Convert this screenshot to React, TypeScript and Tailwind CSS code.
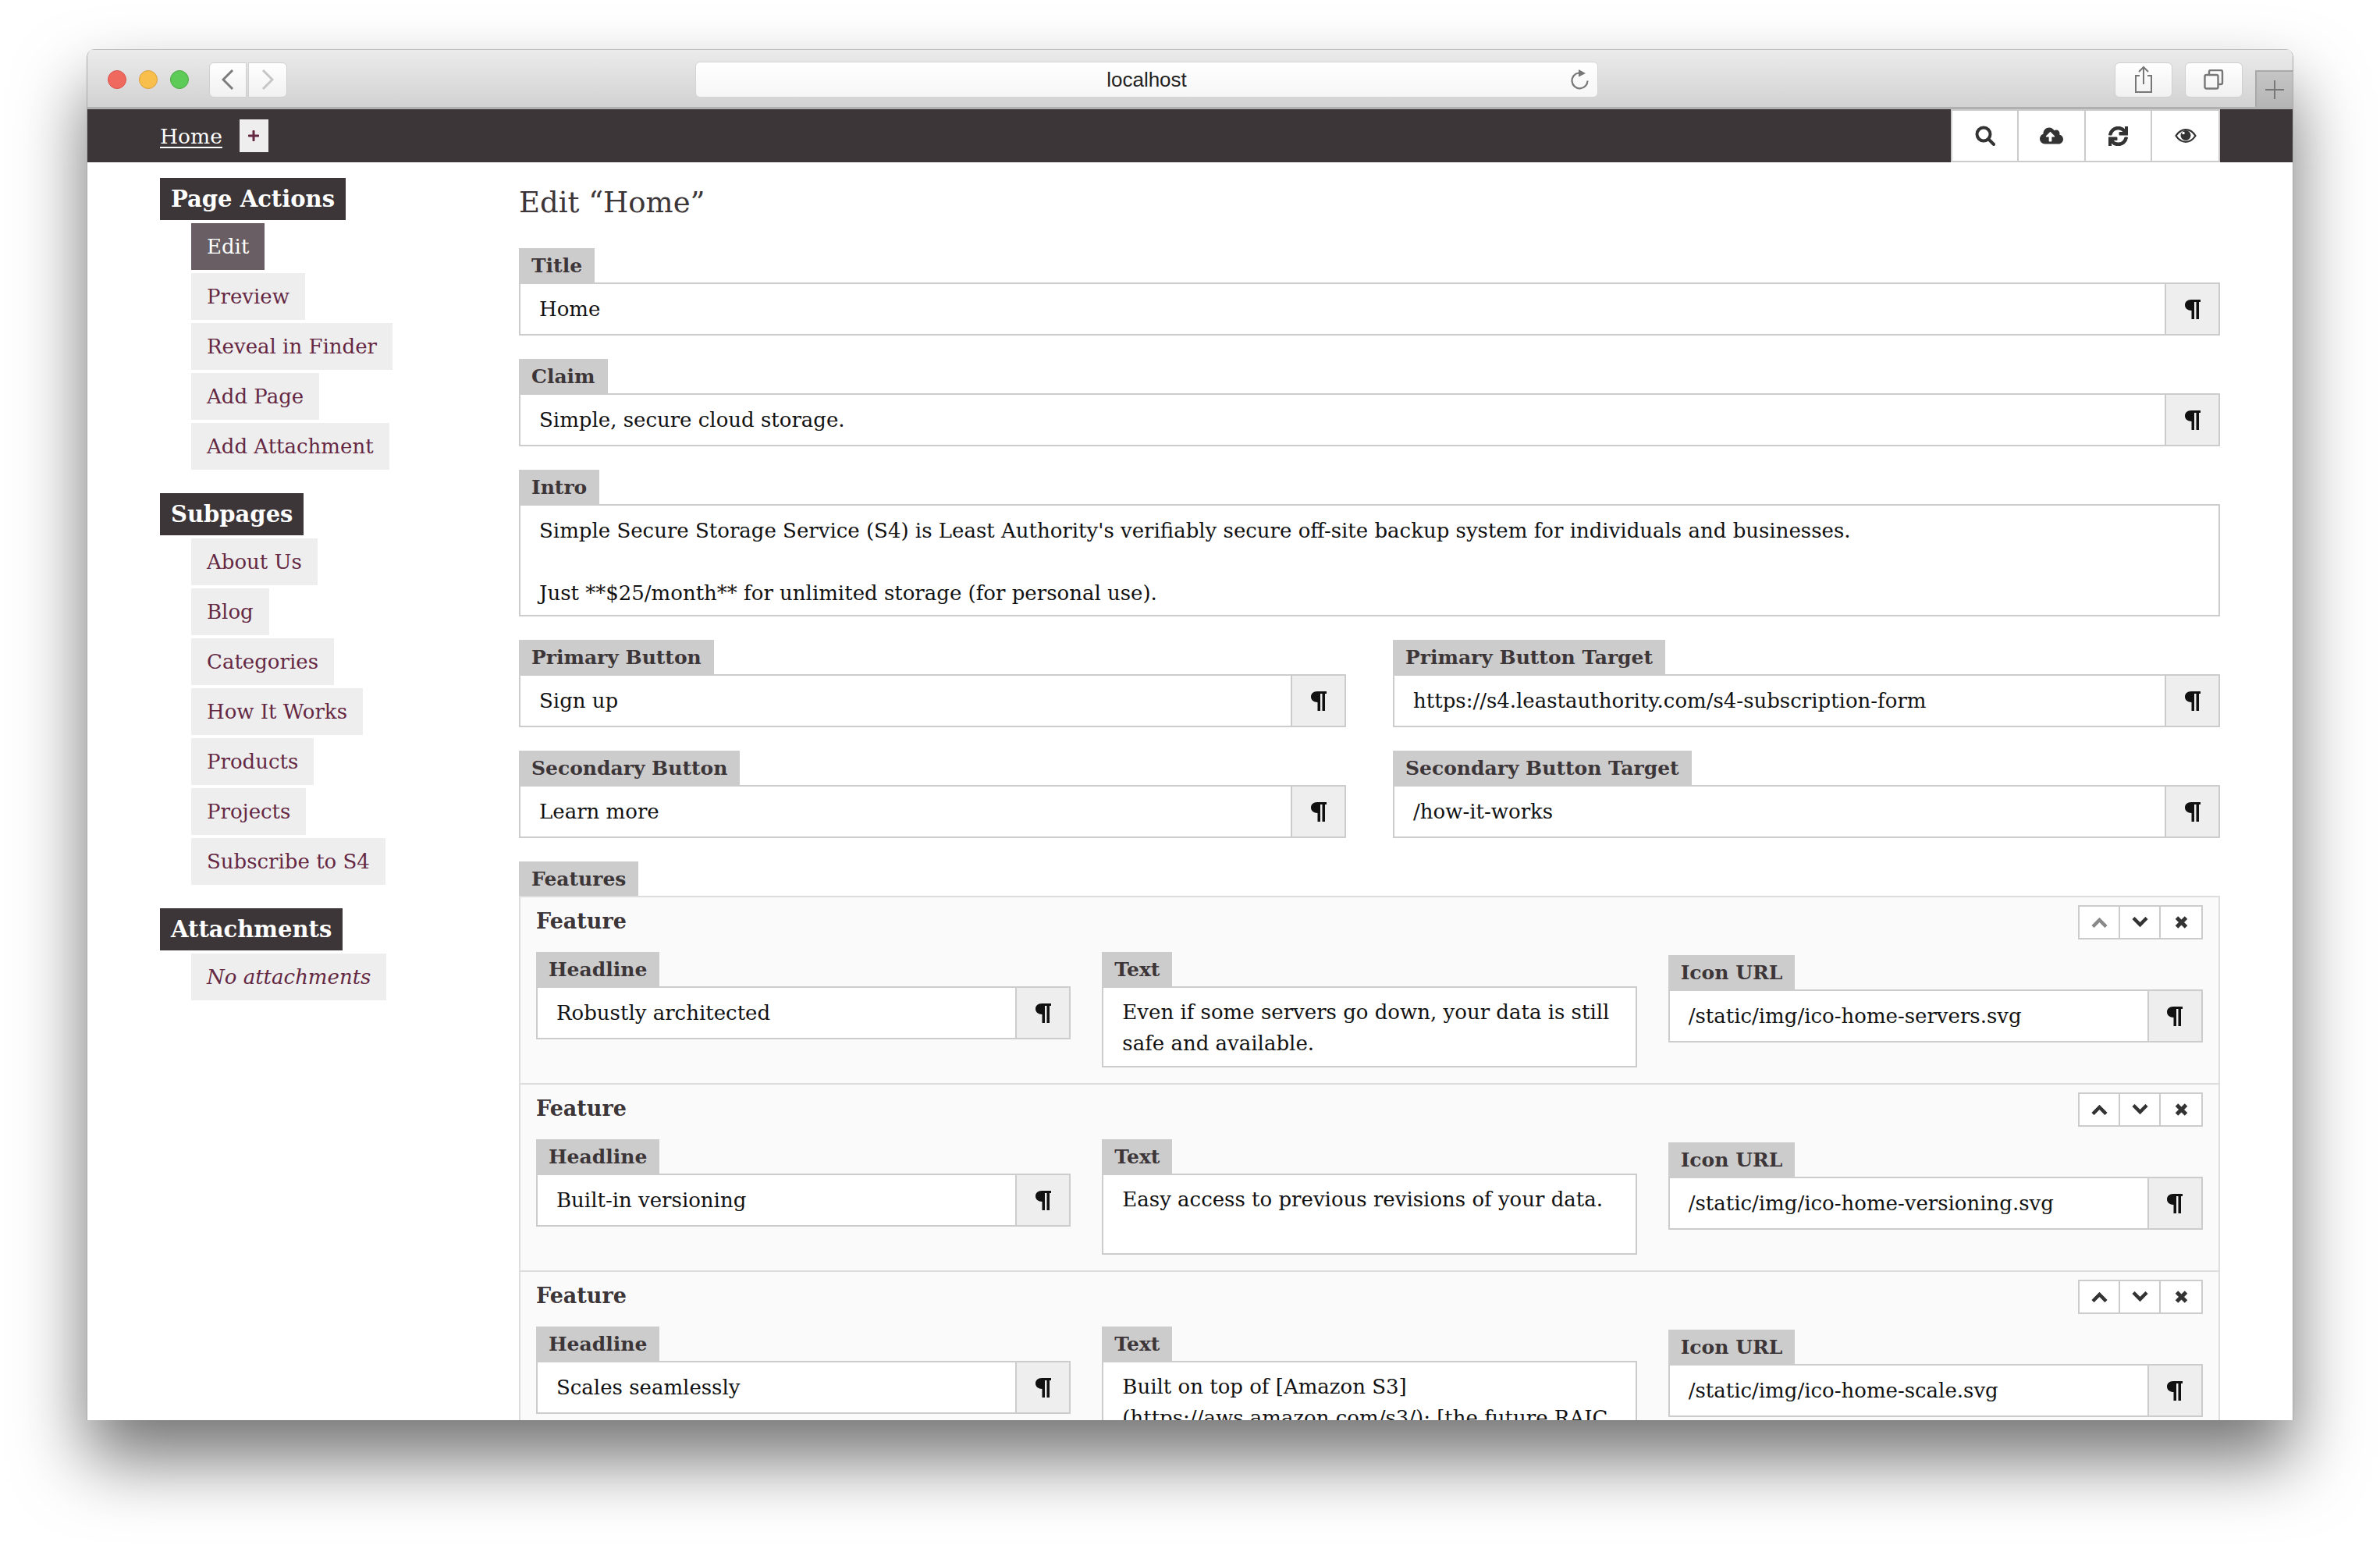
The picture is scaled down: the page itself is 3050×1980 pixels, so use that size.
import React from 'react';
import { FaCloudUploadAlt, FaPlus, FaSync } from 'react-icons/fa';

const slab = "font-['DejaVu_Serif',serif]";

const actions = [
  { label: 'Edit', active: true },
  { label: 'Preview' },
  { label: 'Reveal in Finder' },
  { label: 'Add Page' },
  { label: 'Add Attachment' },
];
const subpages = ['About Us', 'Blog', 'Categories', 'How It Works', 'Products', 'Projects', 'Subscribe to S4'];

const features = [
  { headline: 'Robustly architected', text: 'Even if some servers go down, your data is still safe and available.', icon: '/static/img/ico-home-servers.svg', first: true },
  { headline: 'Built-in versioning', text: 'Easy access to previous revisions of your data.', icon: '/static/img/ico-home-versioning.svg' },
  { headline: 'Scales seamlessly', text: 'Built on top of [Amazon S3](https://aws.amazon.com/s3/); [the future RAIC', icon: '/static/img/ico-home-scale.svg' },
];

const Pilcrow = () => (
  <svg width="20" height="25" viewBox="0 0 20 25" fill="#111111">
    <path d="M8 0h12v3h-2v22h-3.5V3h-2.5v22H8.500V14C3.500 14 0 11 0 7s3-7 8-7z" />
  </svg>
);

const ChevronUp = () => (
  <svg width="21" height="14" viewBox="0 0 21 14" fill="none" stroke="currentColor" strokeWidth="4.500"><path d="M2 12.500 10.500 4 19 12.500" /></svg>
);

const ChevronDown = () => (
  <svg width="21" height="14" viewBox="0 0 21 14" fill="none" stroke="currentColor" strokeWidth="4.500"><path d="M2 1.500 10.500 10 19 1.500" /></svg>
);

const Cross = () => (
  <svg width="17" height="16" viewBox="0 0 17 16" fill="none" stroke="currentColor" strokeWidth="5"><path d="M2.500 2 14.500 14M14.500 2 2.500 14" /></svg>
);

const SideLink = ({ label, active, italic }: { label: string; active?: boolean; italic?: boolean }) => (
  <a className={`block w-fit h-[60px] px-5 leading-[60px] text-[26px] ${active ? 'bg-[#685e63] text-white' : 'bg-[#eeeeee] text-[#652843]'} ${italic ? 'italic' : ''}`}>
    {label}
  </a>
);

const SideHead = ({ children }: { children: React.ReactNode }) => (
  <h2 className="w-fit h-[54px] px-[14px] bg-[#3d3639] text-white text-[29px] font-bold leading-[54px]">{children}</h2>
);

const Label = ({ children, short }: { children: React.ReactNode; short?: boolean }) => (
  <div className={`w-fit px-4 bg-[#cccccc] text-[#3d3639] text-[25px] font-bold leading-[46px] ${short ? 'h-[44px]' : 'h-[46px]'}`}>{children}</div>
);

const Field = ({ label, value, className }: { label: string; value: string; className?: string }) => (
  <div className={className}>
    <Label>{label}</Label>
    <div className="-mt-[2px] flex h-[68px] border-2 border-[#cccccc] bg-white">
      <div className="flex-1 px-6 leading-[64px] text-[26px] text-[#111111]">{value}</div>
      <div className="flex w-[69px] items-center justify-center border-l-2 border-[#cccccc] bg-[#eeeeee]">
        <Pilcrow />
      </div>
    </div>
  </div>
);

const Feature = ({ headline, text, icon, first }: { headline: string; text: string; icon: string; first?: boolean }) => (
  <section className="h-[240px] border-b-2 border-[#dddddd] px-5 pt-[10px]">
    <div className="flex h-[60px] justify-between">
      <h3 className="text-[27px] font-bold leading-[42px] text-[#3d3639]">Feature</h3>
      <div className="flex h-[44px] border-2 border-[#cccccc] bg-white text-[#333333]">
        <span className={`flex w-[52px] items-center justify-center border-r-2 border-[#cccccc] ${first ? 'text-[#888888]' : ''}`}><ChevronUp /></span>
        <span className="flex w-[52px] items-center justify-center border-r-2 border-[#cccccc]"><ChevronDown /></span>
        <span className="flex w-[52px] items-center justify-center"><Cross /></span>
      </div>
    </div>
    <div className="grid grid-cols-3 gap-x-10">
      <Field label="Headline" value={headline} />
      <div>
        <Label>Text</Label>
        <div className="-mt-[2px] h-[104px] border-2 border-[#cccccc] bg-white px-6 pt-[11px] text-[26px] leading-[40px] text-[#111111]">{text}</div>
      </div>
      <Field label="Icon URL" value={icon} className="pt-1" />
    </div>
  </section>
);

export default function App() {
  return (
    <div className={`h-[1980px] w-[3050px] overflow-hidden bg-white pl-[111px] pt-[63px] ${slab}`}>
      <div className="flex h-[1757px] w-[2828px] flex-col overflow-hidden rounded-t-[10px] border-x border-[#aaaaaa] bg-white shadow-[0_50px_90px_rgba(0,0,0,0.55)]">
        <header className="relative flex h-[77px] shrink-0 items-center border-t border-b-[3px] border-t-[#bcbcbc] border-b-[#b1b0b1] bg-gradient-to-b from-[#ecebec] to-[#d3d2d3] pt-[3px] font-['Liberation_Sans',sans-serif]">
          <span className="ml-[26px] h-6 w-6 rounded-full border border-[#d9534c] bg-[#f0695f]" />
          <span className="ml-4 h-6 w-6 rounded-full border border-[#d9a03e] bg-[#f8bf4d]" />
          <span className="ml-4 h-6 w-6 rounded-full border border-[#4ba947] bg-[#5ccb57]" />
          <button className="ml-[26px] flex h-[45px] w-[48px] items-center justify-center rounded-l-md border border-[#cfcfcf] bg-gradient-to-b from-white to-[#f1f1f1]">
            <svg width="16" height="26" viewBox="0 0 16 26" fill="none" stroke="#7c7c7c" strokeWidth="3"><path d="M14 1 2 13l12 12" /></svg>
          </button>
          <button className="ml-[2px] flex h-[45px] w-[50px] items-center justify-center rounded-r-md border border-[#cfcfcf] bg-gradient-to-b from-white to-[#f1f1f1]">
            <svg width="16" height="26" viewBox="0 0 16 26" fill="none" stroke="#c6c6c6" strokeWidth="3"><path d="m2 1 12 12L2 25" /></svg>
          </button>
          <div className="relative ml-[523px] flex h-[46px] w-[1157px] items-center justify-center rounded-md border border-[#d4d4d4] bg-gradient-to-b from-white to-[#f6f6f6] text-[26px] text-[#222222]">
            localhost
            <svg className="absolute right-[11px] top-[9px]" width="24" height="26" viewBox="0 0 24 26" fill="none" stroke="#777777" strokeWidth="2.200">
              <path d="M11 4.500a10 10 0 1 0 11.500 10" />
              <path d="M11 0l9 5-9 4.500z" fill="#777777" stroke="none" />
            </svg>
          </div>
          <button className="ml-[662px] flex h-[45px] w-[74px] items-center justify-center rounded-md border border-[#cfcfcf] bg-gradient-to-b from-white to-[#f1f1f1]">
            <svg width="24" height="36" viewBox="0 0 24 36" fill="none" stroke="#777777" strokeWidth="2"><path d="M7 13H2v21h20V13h-5M12 24V2M6 8l6-6 6 6" /></svg>
          </button>
          <button className="ml-4 flex h-[45px] w-[74px] items-center justify-center rounded-md border border-[#cfcfcf] bg-gradient-to-b from-white to-[#f1f1f1]">
            <svg width="26" height="26" viewBox="0 0 26 26" fill="none" stroke="#777777" strokeWidth="2.400"><rect x="1.500" y="7" width="17" height="17.500" rx="2" /><path d="M7 7V3a2 2 0 0 1 2-2h13a2 2 0 0 1 2 2v14a2 2 0 0 1-2 2h-3" /></svg>
          </button>
          <div className="absolute bottom-0 right-0 flex h-[47px] w-[48px] items-center justify-center border-l-2 border-t-2 border-[#a9a9a9] bg-gradient-to-b from-[#c6c5c6] to-[#b6b5b6]">
            <svg width="24" height="24" viewBox="0 0 24 24" stroke="#777777" strokeWidth="2"><path d="M12 0v24M0 12h24" /></svg>
          </div>
        </header>

        <nav className="flex h-[68px] shrink-0 items-center bg-[#3d3639] px-[93px]">
          <a className="pt-[2px] text-[26.500px] leading-[66px] text-white underline underline-offset-4">Home</a>
          <span className="ml-[22px] flex h-[42px] w-[37px] items-center justify-center bg-[#eeeeee] text-[#652843]"><FaPlus size={16} /></span>
          <div className="ml-auto flex h-[68px] border-2 border-[#cccccc] bg-white text-[#333333]">
            <span className="flex w-[85px] items-center justify-center border-r-2 border-[#cccccc]">
              <svg width="26" height="26" viewBox="0 0 26 26" fill="none" stroke="currentColor" strokeLinecap="round"><circle cx="11" cy="11" r="8.500" strokeWidth="4" /><path d="M18 18l6 6" strokeWidth="4" /></svg>
            </span>
            <span className="flex w-[86px] items-center justify-center border-r-2 border-[#cccccc]"><FaCloudUploadAlt size={30} /></span>
            <span className="flex w-[85px] items-center justify-center border-r-2 border-[#cccccc]"><FaSync size={25} stroke="currentColor" strokeWidth={24} /></span>
            <span className="flex w-[85px] items-center justify-center">
              <svg width="28" height="18" viewBox="0 0 28 18" fill="none">
                <path d="M1.500 9C5 3.500 9 1.200 14 1.200S23 3.500 26.500 9C23 14.500 19 16.800 14 16.800S5 14.500 1.500 9z" stroke="currentColor" strokeWidth="2.200" />
                <circle cx="14" cy="8.500" r="6.500" fill="currentColor" />
                <circle cx="11" cy="5.500" r="1.800" fill="white" />
              </svg>
            </span>
          </div>
        </nav>

        <div className="flex min-h-0 flex-1 overflow-hidden px-[93px]">
          <aside className="w-[460px] shrink-0 pt-5">
            <SideHead>Page Actions</SideHead>
            <div className="ml-10 mt-1 flex flex-col gap-1">
              {actions.map((a) => <SideLink key={a.label} label={a.label} active={a.active} />)}
            </div>
            <div className="mt-[30px]"><SideHead>Subpages</SideHead></div>
            <div className="ml-10 mt-1 flex flex-col gap-1">
              {subpages.map((s) => <SideLink key={s} label={s} />)}
            </div>
            <div className="mt-[30px]"><SideHead>Attachments</SideHead></div>
            <div className="ml-10 mt-1"><SideLink label="No attachments" italic /></div>
          </aside>

          <main className="min-w-0 flex-1 pt-[28px]">
            <h1 className="h-[82px] text-[37px] leading-[48px] text-[#3d3639]">Edit “Home”</h1>
            <Field label="Title" value="Home" />
            <Field label="Claim" value="Simple, secure cloud storage." className="mt-[30px]" />
            <div className="mt-[30px]">
              <Label>Intro</Label>
              <div className="-mt-[2px] h-[144px] border-2 border-[#cccccc] bg-white px-6 pt-[12px] text-[26px] leading-[40px] text-[#111111]">
                <p>Simple Secure Storage Service (S4) is Least Authority's verifiably secure off-site backup system for individuals and businesses.</p>
                <p className="mt-10">Just **$25/month** for unlimited storage (for personal use).</p>
              </div>
            </div>
            <div className="mt-[30px] grid grid-cols-2 gap-x-[60px] gap-y-[30px]">
              <Field label="Primary Button" value="Sign up" />
              <Field label="Primary Button Target" value="https://s4.leastauthority.com/s4-subscription-form" />
              <Field label="Secondary Button" value="Learn more" />
              <Field label="Secondary Button Target" value="/how-it-works" />
            </div>
            <div className="mt-[30px]">
              <Label short>Features</Label>
              <div className="border-x-2 border-t-2 border-[#dddddd] bg-[#fafafa]">
                {features.map((f) => <Feature key={f.icon} {...f} />)}
              </div>
            </div>
          </main>
        </div>
      </div>
    </div>
  );
}
